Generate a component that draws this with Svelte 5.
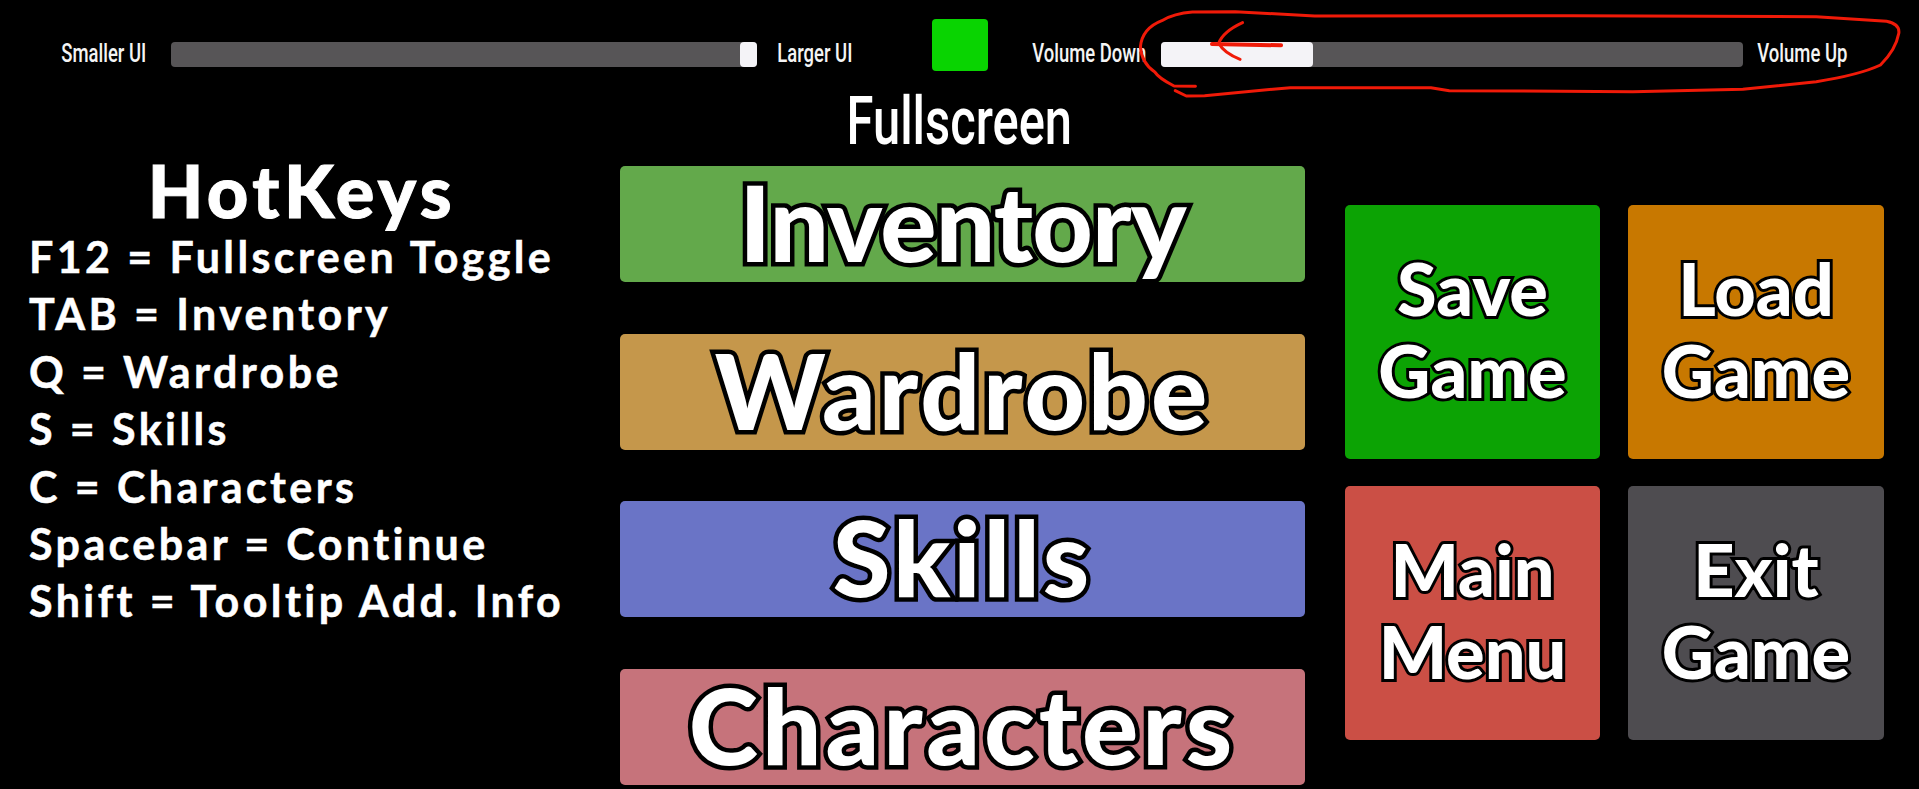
<script>
  const keys = ['F12 = Fullscreen Toggle','TAB = Inventory','Q = Wardrobe','S = Skills','C = Characters','Spacebar = Continue','Shift = Tooltip Add. Info'];
  const menu = [['Inventory','inv'],['Wardrobe','war'],['Skills','ski'],['Characters','cha']];
  const tiles = [[['Save','Game'],'sav'],[['Load','Game'],'loa'],[['Main','Menu'],'mai'],[['Exit','Game'],'exi']];
</script>

<div class="page">
  <header class="top">
    <span class="lab l1"><span>Smaller UI</span></span>
    <div class="slider s1"><i class="thumb"></i></div>
    <span class="lab l2"><span>Larger UI</span></span>
    <div class="square"></div>
    <span class="lab l3"><span>Volume Down</span></span>
    <div class="slider s2"><i class="fill"></i></div>
    <span class="lab l4"><span>Volume Up</span></span>
  </header>

  <div class="full"><span>Fullscreen</span></div>

  <main class="body">
    <section class="keys">
      <h1>HotKeys</h1>
      {#each keys as k}<p>{k}</p>{/each}
    </section>
    <section class="menu">
      {#each menu as [t, c]}<button class="big {c}"><span>{t}</span></button>{/each}
    </section>
    <section class="tiles">
      {#each tiles as [t, c]}<button class="tile {c}"><span>{t[0]}</span><span>{t[1]}</span></button>{/each}
    </section>
  </main>

  <svg class="ink" width="1919" height="789" viewBox="0 0 1919 789" fill="none" aria-hidden="true">
    <g transform="translate(960 0) scale(0.6116 0.3333)">
      <path vector-effect="non-scaling-stroke" d="M385 259 L350 258 Q325 235 318 215 Q297 190 295 140 Q298 85 330 62 Q350 40 380 36 L450 35 L580 48 L1000 47 L1400 50 L1515 64 Q1537 72 1535 100 Q1530 150 1505 195 Q1470 225 1400 245 L1280 268 L1100 275 L800 272 L770 263 L540 263 L400 287 L370 288 L352 272" />
      <path vector-effect="non-scaling-stroke" d="M462 68 Q430 95 423 130 Q432 160 458 178" />
      <path class="thick" vector-effect="non-scaling-stroke" d="M412 132 L525 136" />
    </g>
  </svg>
</div>

<style>
  :global(body) { margin: 0; background: #000; }
  .page { position: relative; width: 1919px; height: 789px; overflow: hidden; background: #000; color: #fff; font-family: "Lato", "Liberation Sans", sans-serif; }

  .top { display: flex; height: 84px; padding-left: 60px; box-sizing: border-box; align-items: flex-start; }
  .lab { display: flex; justify-content: center; margin-top: 41px; height: 25px; line-height: 25px; font-family: "Roboto", sans-serif; font-size: 26px; font-weight: 500; white-space: nowrap; color: #f4f4f4; }
  .lab span { display: inline-block; transform: scaleX(0.71); }
  .l1 { width: 87px; margin-right: 24px; }
  .l2 { width: 76px; margin-left: 20px; }
  .l3 { width: 113px; margin-left: 45px; }
  .l4 { width: 89px; margin-left: 15px; }
  .slider { position: relative; margin-top: 42px; height: 25px; border-radius: 4px; background: #575557; }
  .s1 { width: 586px; }
  .s2 { width: 582px; margin-left: 15px; }
  .thumb { position: absolute; right: 0; top: 0; width: 17px; height: 25px; border-radius: 4px; background: #f4f3f7; }
  .fill { position: absolute; left: 0; top: 0; width: 152px; height: 25px; border-radius: 4px; background: #f4f3f7; }
  .square { width: 56px; height: 52px; margin: 19px 0 0 79px; border-radius: 4px; background: #09d401; }

  .full { height: 82px; display: flex; justify-content: center; align-items: flex-start; font-family: "Roboto", sans-serif; font-size: 66px; font-weight: 500; line-height: 76px; }
  .full span { display: inline-block; transform: scaleX(0.74); }

  .body { display: grid; grid-template-columns: 620px 685px 539px; column-gap: 0; }
  .keys { padding-left: 29px; width: 546px; }
  .keys h1 { margin: -14px 0 0; text-align: center; font-size: 72px; line-height: 76px; font-weight: 900; letter-spacing: 4.5px; -webkit-text-stroke: 1px #fff; }
  .keys p { margin: 0; font-size: 43px; line-height: 57.4px; font-weight: 700; letter-spacing: 3.4px; white-space: nowrap; -webkit-text-stroke: 0.5px #fff; }

  .menu { display: flex; flex-direction: column; gap: 51.5px; }
  button { border: 0; padding: 0; color: #fff; font-family: inherit; border-radius: 5px; font-weight: 900; paint-order: stroke fill; stroke-linejoin: round; }
  .big { height: 116px; font-size: 105px; line-height: 116px; overflow: visible; -webkit-text-stroke: 9px #000; }
  .big span { display: block; margin-top: -6px; }
  .inv { background: #63a94b; letter-spacing: -0.8px; }
  .war { background: #c5974b; letter-spacing: 3px; }
  .ski { background: #6a74c6; letter-spacing: 3px; }
  .cha { background: #c6737b; letter-spacing: 4px; }

  .tiles { display: grid; grid-template-columns: 255px 256px; grid-auto-rows: 254px; column-gap: 28px; row-gap: 27px; margin: 39px 0 0 40px; }
  .tile { display: flex; flex-direction: column; align-items: center; justify-content: center; padding-bottom: 6px; box-sizing: border-box; font-size: 72px; line-height: 82px; letter-spacing: 0; -webkit-text-stroke: 6px #000; }
  .sav { background: #0ca304; }
  .loa { background: #c87800; }
  .mai { background: #cb4f45; }
  .exi { background: #4e4c50; }

  .ink { position: absolute; left: 0; top: 0; pointer-events: none; }
  .ink path { stroke: #f01a08; stroke-width: 3; stroke-linecap: round; stroke-linejoin: round; }
  .ink .thick { stroke-width: 4; }
</style>
